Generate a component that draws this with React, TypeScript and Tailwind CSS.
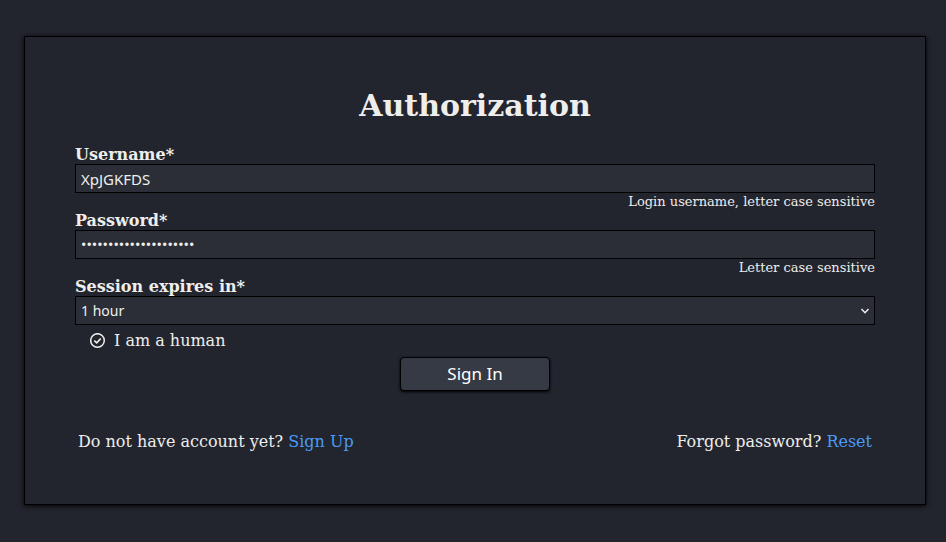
import React, { useState } from 'react';

const FIELD =
  'block h-[29px] w-full rounded-none border border-black bg-[#2c2e37] px-[5px] text-[#eeeeec] outline-none';

const LABEL = 'block text-base leading-[19px] font-bold';

export default function App() {
  const [username, setUsername] = useState('XpJGKFDS');
  const [password, setPassword] = useState('correcthorsebatteries');
  const [session, setSession] = useState('1 hour');
  const [human, setHuman] = useState(true);

  return (
    <div className='min-h-screen bg-[#23252e] pt-9 pr-5 pb-9 pl-6 font-["DejaVu_Serif",serif] text-[#eeeeec]'>
      <main className="border border-black px-[50px] pt-[50px] pb-[51px] shadow-[0_1px_5px_#000000]">
        <h1 className="mb-5 text-center text-3xl leading-[38px] font-bold">Authorization</h1>

        <form onSubmit={(e) => e.preventDefault()}>
          <label htmlFor="username" className={LABEL}>Username*</label>
          <input
            id="username"
            type="text"
            className={`${FIELD} font-["Noto_Sans",sans-serif] text-[15px]`}
            value={username}
            onChange={(e) => setUsername(e.target.value)}
          />
          <p className="text-right text-[13px] leading-[18px]">Login username, letter case sensitive</p>

          <label htmlFor="password" className={LABEL}>Password*</label>
          <input
            id="password"
            type="password"
            className={`${FIELD} font-["Roboto",sans-serif] text-base`}
            value={password}
            onChange={(e) => setPassword(e.target.value)}
          />
          <p className="text-right text-[13px] leading-[18px]">Letter case sensitive</p>

          <label htmlFor="session" className={LABEL}>Session expires in*</label>
          <div className="relative">
            <select
              id="session"
              className={`${FIELD} appearance-none font-["Noto_Sans",sans-serif] text-sm`}
              value={session}
              onChange={(e) => setSession(e.target.value)}
            >
              <option>1 hour</option>
              <option>1 day</option>
              <option>1 week</option>
            </select>
            <svg
              className="pointer-events-none absolute top-3 right-[5px] h-2 w-2.5"
              viewBox="0 0 10 8"
              fill="none"
              stroke="currentColor"
              strokeWidth="1.5"
            >
              <path d="M1.5 1 5 4.7 8.5 1" />
            </svg>
          </div>

          <label className="flex h-8 w-fit items-center gap-2 pl-[15px]">
            <input
              type="checkbox"
              className="peer sr-only"
              checked={human}
              onChange={(e) => setHuman(e.target.checked)}
            />
            <svg
              className="h-4 w-4 peer-focus-visible:outline"
              viewBox="0 0 16 16"
              fill="none"
              stroke="currentColor"
              strokeWidth="1.5"
            >
              <circle cx="7.5" cy="7.5" r="6.8" />
              {human && <path d="M4.3 7.6 6.7 9.8 10.8 5.5" strokeWidth="1.7" />}
            </svg>
            I am a human
          </label>

          <button
            type="submit"
            className='mx-auto block h-[34px] w-[150px] rounded-[4px] border border-black bg-[#363a45] font-["Noto_Sans",sans-serif] text-[17px] text-white shadow-[0_1px_3px_#000000]'
          >
            Sign In
          </button>
        </form>

        <div className="mt-10 flex justify-between px-[3px] leading-[22px]">
          <p>
            Do not have account yet? <a href="#signup" className="text-[#4a9af5]">Sign Up</a>
          </p>
          <p>
            Forgot password? <a href="#reset" className="text-[#4a9af5]">Reset</a>
          </p>
        </div>
      </main>
    </div>
  );
}
